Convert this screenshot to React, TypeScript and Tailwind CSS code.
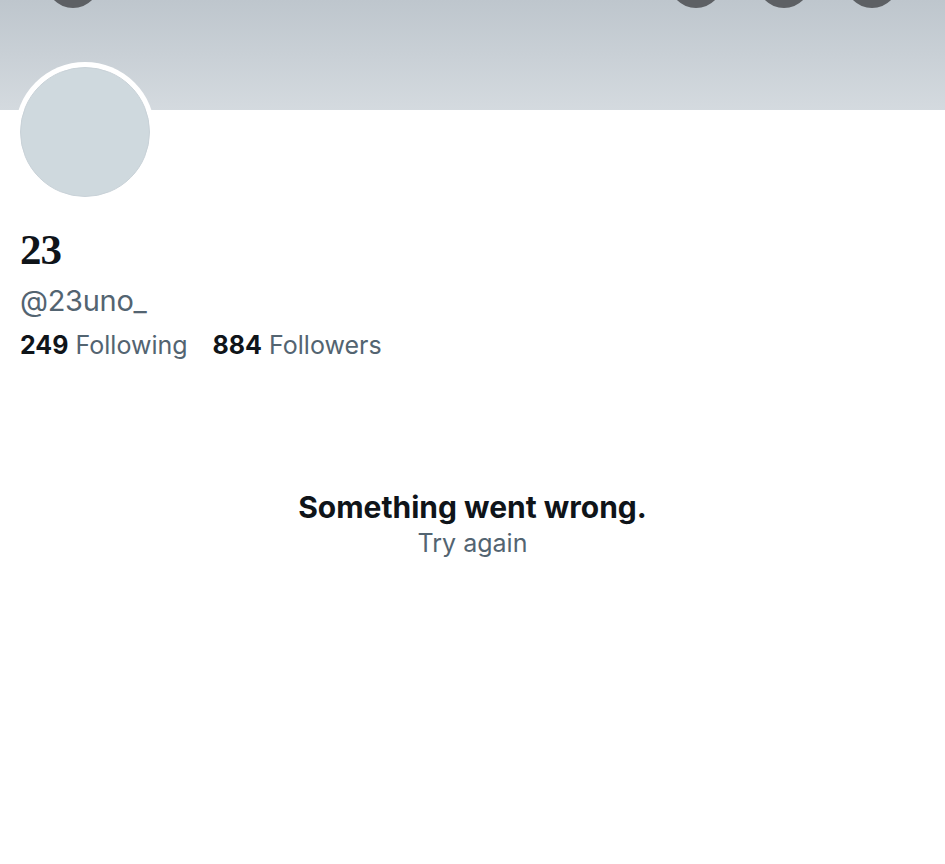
export default function App() {
  return (
    <div className="min-h-[864px] w-[945px] overflow-hidden bg-white font-['Inter',sans-serif]">
      {/* Banner */}
      <div className="relative h-[110px] bg-gradient-to-b from-[#bec6cd] to-[#d4dadf]">
        <div className="absolute -top-[46px] left-[46px] h-[54px] w-[54px] rounded-full bg-[#5d6064]" />
        <div className="absolute -top-[46px] right-[46px] flex gap-[34px]">
          <div className="h-[54px] w-[54px] rounded-full bg-[#5d6064]" />
          <div className="h-[54px] w-[54px] rounded-full bg-[#5d6064]" />
          <div className="h-[54px] w-[54px] rounded-full bg-[#5d6064]" />
        </div>
      </div>

      {/* Profile */}
      <div className="px-5">
        <div className="relative -mt-[48px] -ml-[5px] h-[140px] w-[140px] rounded-full bg-white p-[5px]">
          <div className="h-full w-full rounded-full border border-[#c9d2d8] bg-[#cfd9de]" />
        </div>
        <h1 className="mt-[28px] font-['Liberation_Serif',serif] text-[43px] leading-[40px] font-bold tracking-[-1px] text-[#0f1419]">
          23
        </h1>
        <p className="mt-[12px] text-[29px] leading-[38px] tracking-[-0.3px] text-[#536471]">@23uno_</p>
        <div className="mt-[8px] flex gap-[25px] text-[25px] leading-[34px]">
          <span>
            <span className="font-bold text-[#0f1419]">249</span>{' '}
            <span className="text-[#536471]">Following</span>
          </span>
          <span>
            <span className="font-bold text-[#0f1419]">884</span>{' '}
            <span className="text-[#536471]">Followers</span>
          </span>
        </div>
      </div>

      {/* Error state */}
      <div className="mt-[126px] flex flex-col items-center">
        <p className="text-[30px] leading-[38px] font-bold text-[#0f1419]">Something went wrong.</p>
        <p className="text-[25px] leading-[34px] text-[#536471]">Try again</p>
      </div>
    </div>
  )
}
